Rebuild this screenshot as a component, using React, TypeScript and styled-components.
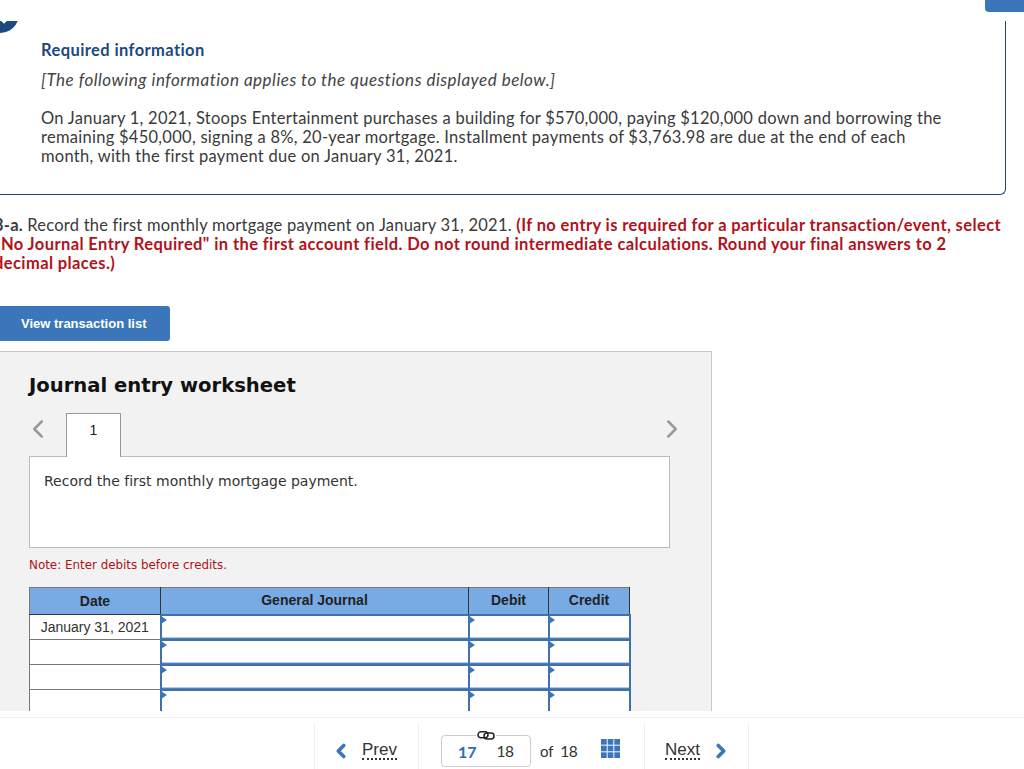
import styled, { createGlobalStyle } from 'styled-components';
import { ChevronLeft, ChevronRight } from 'lucide-react';

const GlobalStyle = createGlobalStyle`
  html, body {
    margin: 0;
    padding: 0;
    background: #fff;
  }
  * {
    box-sizing: border-box;
  }
`;

const rows = ['January 31, 2021', '', '', ''];
const gridStops = [0, 6.65, 13.3];

const App = () => {
  return (
    <Page>
      <GlobalStyle />
      <Scroller>
        <TopBar>
          <SubmitTab />
        </TopBar>
        <InfoBox>
          <Badge />
          <InfoTitle>Required information</InfoTitle>
          <InfoLead>[The following information applies to the questions displayed below.]</InfoLead>
          <InfoBody>
            On January 1, 2021, Stoops Entertainment purchases a building for $570,000, paying $120,000 down and
            borrowing the remaining $450,000, signing a 8%, 20-year mortgage. Installment payments of $3,763.98 are due
            at the end of each month, with the first payment due on January 31, 2021.
          </InfoBody>
        </InfoBox>
        <Question>
          <b>3-a.</b> Record the first monthly mortgage payment on January 31, 2021.{' '}
          <strong>
            (If no entry is required for a particular transaction/event, select "No Journal Entry Required" in the first
            account field. Do not round intermediate calculations. Round your final answers to 2 decimal places.)
          </strong>
        </Question>
        <ViewButton>View transaction list</ViewButton>
        <Worksheet>
          <WorksheetTitle>Journal entry worksheet</WorksheetTitle>
          <TabRow>
            <ArrowLeft size={30} strokeWidth={2} />
            <Tab>1</Tab>
            <ArrowRight size={30} strokeWidth={2} />
          </TabRow>
          <Prompt>Record the first monthly mortgage payment.</Prompt>
          <Note>Note: Enter debits before credits.</Note>
          <JournalTable>
            <colgroup>
              <col width={131} />
              <col width={308} />
              <col width={80} />
              <col width={81} />
            </colgroup>
            <thead>
              <tr>
                <HeadCell>Date</HeadCell>
                <HeadCell>General Journal</HeadCell>
                <HeadCell>Debit</HeadCell>
                <HeadCell>Credit</HeadCell>
              </tr>
            </thead>
            <tbody>
              {rows.map((date, i) => (
                <tr key={i}>
                  <DateCell>{date}</DateCell>
                  <InputCell />
                  <InputCell />
                  <InputCell />
                </tr>
              ))}
            </tbody>
          </JournalTable>
        </Worksheet>
      </Scroller>
      <Footer>
        <PrevBlock>
          <NavChevron as={ChevronLeft} size={22} strokeWidth={4} />
          <NavLabel>Prev</NavLabel>
        </PrevBlock>
        <Pager>
          <PageBox>
            <LinkIcon viewBox="0 0 20 11" fill="none" stroke="#222" strokeWidth="1.5">
              <rect x="2" y="1.8" width="10" height="6" rx="3" />
              <rect x="8" y="3" width="10" height="6" rx="3" />
            </LinkIcon>
            <CurrentPage>17</CurrentPage>
            <OtherPage>18</OtherPage>
          </PageBox>
          <PageCount>
            of <span>18</span>
          </PageCount>
          <GridIcon viewBox="0 0 19 19" fill="#3b76ba">
            {gridStops.map(y =>
              gridStops.map(x => <rect key={`${x}-${y}`} x={x} y={y} width="5.7" height="5.7" />)
            )}
          </GridIcon>
        </Pager>
        <NextBlock>
          <NavLabel>Next</NavLabel>
          <NavChevron as={ChevronRight} size={22} strokeWidth={4} />
        </NextBlock>
      </Footer>
    </Page>
  );
};

const Page = styled.div`
  width: 1024px;
  height: 769px;
  overflow: hidden;
  display: flex;
  flex-direction: column;
  background: #fff;
`;

const Scroller = styled.div`
  height: 711px;
  flex: none;
  overflow: hidden;
`;

const TopBar = styled.div`
  height: 21px;
  display: flex;
  justify-content: flex-end;
  align-items: flex-start;
`;

const SubmitTab = styled.div`
  width: 39px;
  height: 12px;
  background: #3b76ba;
  border-radius: 0 0 0 4px;
`;

const InfoBox = styled.section`
  position: relative;
  width: 1006px;
  height: 174px;
  padding: 20px 60px 0 41px;
  border-right: 1px solid #1c4a80;
  border-bottom: 1px solid #1c4a80;
  border-bottom-right-radius: 6px;
  overflow: hidden;
  font-family: Lato, 'Liberation Sans', sans-serif;
`;

const Badge = styled.div`
  position: absolute;
  left: -19px;
  top: -26px;
  width: 38px;
  height: 38px;
  border-radius: 50%;
  background: #1c4a80;

  &::after {
    content: '';
    position: absolute;
    left: 21px;
    top: 24px;
    width: 4px;
    height: 4px;
    background: #fff;
    transform: rotate(45deg);
  }
`;

const InfoTitle = styled.h2`
  margin: 0;
  font-size: 16.5px;
  line-height: 19px;
  font-weight: 700;
  letter-spacing: 0.4px;
  color: #1c4a80;
`;

const InfoLead = styled.p`
  margin: 10px 0 0;
  font-size: 17px;
  line-height: 19px;
  font-style: italic;
  letter-spacing: 0.5px;
  color: #444;
`;

const InfoBody = styled.p`
  margin: 20px 0 0;
  font-size: 16.5px;
  line-height: 19px;
  letter-spacing: 0.27px;
  color: #3a3a3a;
`;

const Question = styled.p`
  width: 1012px;
  margin: 21px 0 0 -6px;
  font-family: Lato, 'Liberation Sans', sans-serif;
  font-size: 16.5px;
  line-height: 19px;
  letter-spacing: 0.22px;
  color: #3a3a3a;

  b {
    font-weight: 700;
  }

  strong {
    color: #b0121b;
    font-weight: 700;
    letter-spacing: 0.4px;
  }
`;

const ViewButton = styled.button`
  display: block;
  width: 170px;
  height: 35px;
  margin: 33px 0 0;
  padding: 0 0 0 21px;
  border: 0;
  border-radius: 0 3px 3px 0;
  background: #3b76ba;
  color: #fff;
  text-align: left;
  font-family: 'Liberation Sans', Arial, sans-serif;
  font-size: 13px;
  font-weight: 700;
`;

const Worksheet = styled.div`
  width: 712px;
  height: 400px;
  margin-top: 10px;
  padding: 22px 0 0 29px;
  background: #f2f2f2;
  border-top: 1px solid #c8c8c8;
  border-right: 1px solid #c8c8c8;
`;

const WorksheetTitle = styled.h3`
  margin: 0;
  font-family: 'DejaVu Sans', Verdana, sans-serif;
  font-size: 19.6px;
  line-height: 24px;
  font-weight: 700;
  color: #111;
`;

const TabRow = styled.div`
  display: flex;
  align-items: flex-start;
  width: 641px;
  height: 44px;
  margin-top: 15px;
  margin-bottom: -1px;
`;

const Tab = styled.div`
  width: 55px;
  height: 44px;
  margin-left: 13px;
  padding-top: 7px;
  background: #fff;
  border: 1px solid #999;
  border-bottom: 0;
  text-align: center;
  font-family: 'Liberation Sans', Arial, sans-serif;
  font-size: 14px;
  line-height: 18px;
  color: #222;
  position: relative;
  z-index: 1;
`;

const ArrowLeft = styled(ChevronLeft)`
  color: #999;
  margin: 1px 0 0 -6px;
  flex: none;
`;

const ArrowRight = styled(ChevronRight)`
  color: #999;
  margin: 1px -17px 0 auto;
  flex: none;
`;

const Prompt = styled.div`
  width: 641px;
  height: 92px;
  padding: 15px 14px;
  background: #fff;
  border: 1px solid #bbb;
  font-family: 'DejaVu Sans', Verdana, sans-serif;
  font-size: 14px;
  line-height: 18px;
  font-variant-ligatures: none;
  color: #333;
`;

const Note = styled.p`
  margin: 10px 0 0;
  font-family: 'DejaVu Sans', Verdana, sans-serif;
  font-size: 11.9px;
  line-height: 14px;
  color: #b0121b;
`;

const JournalTable = styled.table`
  width: 600px;
  margin-top: 15px;
  border-collapse: collapse;
  table-layout: fixed;
  font-family: 'Liberation Sans', Arial, sans-serif;
  font-size: 14px;
`;

const HeadCell = styled.th`
  height: 27px;
  padding: 0 0 1px;
  background: #78aae4;
  border: 1px solid #333;
  border-top-color: #777;
  border-left-color: #777;
  color: #222;
  font-weight: 700;
  text-align: center;
`;

const DateCell = styled.td`
  height: 25px;
  padding: 0 0 1px;
  background: #fff;
  border: 1px solid #777;
  text-align: center;
  color: #333;
`;

const InputCell = styled.td`
  position: relative;
  height: 25px;
  padding: 0;
  background: #fff;
  border: 2px solid #3f72ad;
  box-shadow: inset 0 -1px 0 #4f7fb8, inset 0 -2px 0 #b4cbe6;

  &::before {
    content: '';
    position: absolute;
    left: -1px;
    top: 0;
    border-left: 6px solid #3b76ba;
    border-top: 4px solid transparent;
    border-bottom: 4px solid transparent;
  }
`;

const Footer = styled.footer`
  height: 52px;
  flex: none;
  display: flex;
  justify-content: center;
  margin-top: 6px;
  padding: 6px 0 0 39px;
  border-top: 1px solid #f0f0f0;
  font-family: Lato, 'Liberation Sans', sans-serif;
  color: #333;
`;

const PrevBlock = styled.div`
  width: 105px;
  display: flex;
  align-items: center;
  gap: 10px;
  padding: 8px 0 0 15px;
  border-left: 1px solid #eee;
  border-right: 1px solid #eee;
`;

const NextBlock = styled(PrevBlock)`
  padding-left: 20px;
`;

const NavChevron = styled.svg`
  color: #3b76ba;
  flex: none;
`;

const NavLabel = styled.span`
  font-family: 'Liberation Sans', Arial, sans-serif;
  font-size: 17px;
  color: #333;
  border-bottom: 2px dotted #333;
  line-height: 16px;
`;

const Pager = styled.div`
  width: 225px;
  display: flex;
  align-items: center;
  padding: 9px 0 0 22px;
`;

const PageBox = styled.div`
  position: relative;
  width: 90px;
  height: 32px;
  display: flex;
  align-items: center;
  gap: 20px;
  padding-left: 16px;
  border: 1px solid #ccc;
  border-radius: 4px;
  font-size: 16px;
`;

const LinkIcon = styled.svg`
  position: absolute;
  top: -6px;
  left: 34px;
  width: 20px;
  height: 11px;
  background: #fff;
`;

const CurrentPage = styled.span`
  color: #2f6cb0;
  font-weight: 700;
`;

const OtherPage = styled.span`
  color: #333;
  font-size: 15.5px;
  letter-spacing: -0.5px;
`;

const PageCount = styled.div`
  margin-left: 9px;
  font-size: 15px;

  span {
    font-size: 15.5px;
    letter-spacing: -0.5px;
    margin-left: 3px;
  }
`;

const GridIcon = styled.svg`
  width: 19px;
  height: 19px;
  margin: -6px 0 0 24px;
  flex: none;
`;

export default App;
